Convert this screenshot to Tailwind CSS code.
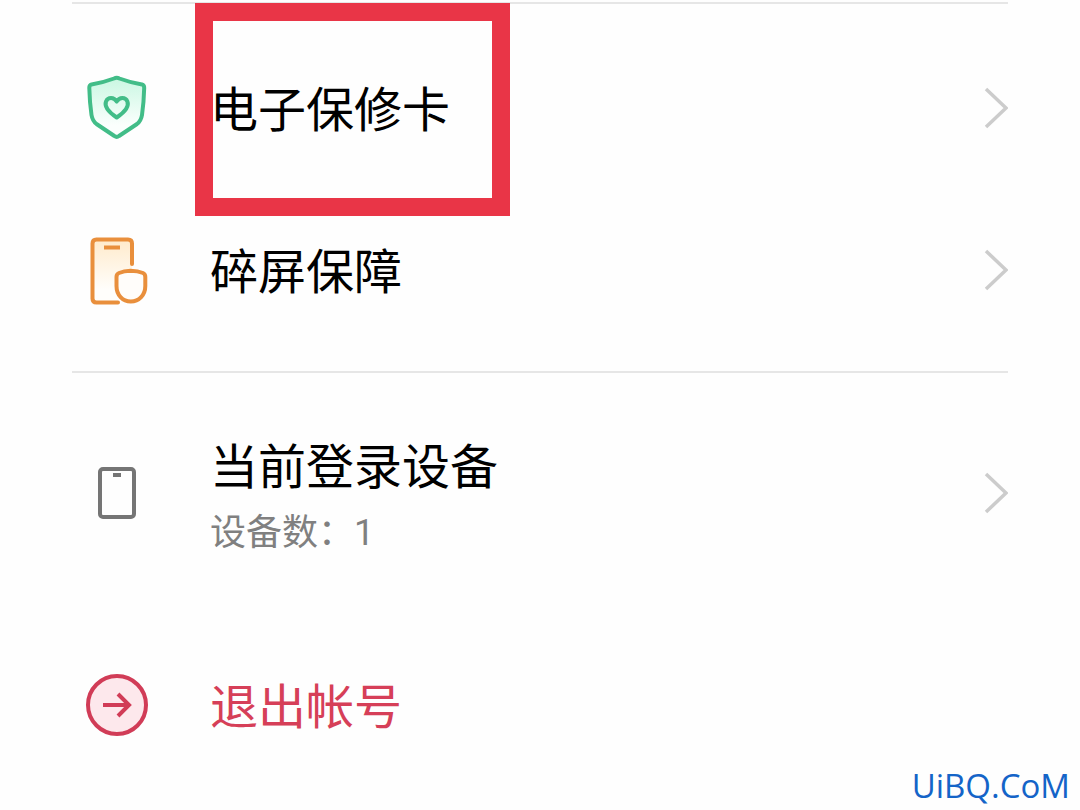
<!DOCTYPE html>
<html lang="zh-CN">
<head>
    <meta charset="UTF-8">
    <meta name="viewport" content="width=device-width, initial-scale=1.0">
    <title>帐号</title>
    <script src="https://cdn.jsdelivr.net/npm/@tailwindcss/browser@4"></script>
</head>
<body class="relative min-h-screen bg-[#fefefe] font-['Noto_Sans_CJK_SC',sans-serif] text-black">
    <main class="px-[72px] pt-[2px]">
        <section class="border-t-2 border-[#e6e6e6] pt-[23px] pb-5">
            <a href="#warranty" class="relative flex h-[162px] items-center gap-12">
                <span class="flex w-[90px] shrink-0 justify-center">
                    <svg class="size-[72px]" viewBox="0 0 72 72" fill="none" stroke="#42bd88" stroke-width="4" stroke-linejoin="round" stroke-linecap="round" aria-hidden="true">
                        <defs>
                            <linearGradient id="shield" x1="0" y1="0" x2="0" y2="1">
                                <stop offset="0" stop-color="#c9f7e2"/>
                                <stop offset="0.8" stop-color="#fbfffd"/>
                            </linearGradient>
                        </defs>
                        <path fill="url(#shield)" d="M33 6.500Q35.700 5.200 38.400 6.500Q49 10.500 61 12.400Q63.300 13 63.200 16Q62.800 31 61 43Q60 49 56 52L38 64Q35.700 65.700 33.400 64L15.500 52Q11.500 49 10.500 43Q8.700 31 8.300 16Q8.200 13 10.500 12.400Q22.500 10.500 33 6.500Z"/>
                        <path d="M35.700 29.600C33 25 27 24.800 25 29.500C22.700 35.500 29 41 35.700 45.500C42.400 41 48.700 35.500 46.400 29.500C44.400 24.800 38.400 25 35.700 29.600Z"/>
                    </svg>
                </span>
                <span class="flex-1 pb-1 text-5xl">电子保修卡</span>
                <svg class="h-[44px] w-[28px]" viewBox="0 0 28 44" fill="none" stroke="#cccccc" stroke-width="3.500" aria-hidden="true">
                    <path d="M6 3L26 22L6 41"/>
                </svg>
                <span class="pointer-events-none absolute -top-6 left-[123px] h-[213px] w-[315px] border-[18px] border-[#e93547]"></span>
            </a>
            <a href="#screen" class="flex h-[162px] items-center gap-12">
                <span class="flex w-[90px] shrink-0 justify-center">
                    <svg class="size-[72px]" viewBox="0 0 72 72" fill="none" stroke="#e98f3c" stroke-width="4" stroke-linecap="round" aria-hidden="true">
                        <defs>
                            <linearGradient id="phone" x1="0" y1="0" x2="0" y2="1">
                                <stop offset="0" stop-color="#ffeacb"/>
                                <stop offset="0.8" stop-color="#fffefb"/>
                            </linearGradient>
                        </defs>
                        <path fill="url(#phone)" stroke="none" d="M11 5H51V36L37 39V68H11Z"/>
                        <path d="M51 30V9.500Q51 5.500 47 5.500H15.500Q11.500 5.500 11.500 9.500V64.500Q11.500 68.500 15.500 68.500H37"/>
                        <path stroke-linecap="butt" d="M23 13.500H39"/>
                        <path fill="#fffdfa" stroke-linejoin="round" d="M49.500 36.800Q57 37 62 39Q64.300 40 64.300 43V52C64.300 61 58 67.500 49.800 67.500S35.500 61 35.500 52V43Q35.500 40 38 39Q43 37 49.500 36.800Z"/>
                    </svg>
                </span>
                <span class="flex-1 pb-1 text-5xl">碎屏保障</span>
                <svg class="h-[44px] w-[28px]" viewBox="0 0 28 44" fill="none" stroke="#cccccc" stroke-width="3.500" aria-hidden="true">
                    <path d="M6 3L26 22L6 41"/>
                </svg>
            </a>
        </section>

        <section class="border-t-2 border-[#e6e6e6]">
            <a href="#devices" class="flex h-[240px] items-center gap-12">
                <span class="flex w-[90px] shrink-0 justify-center">
                    <svg class="size-[72px]" viewBox="0 0 72 72" fill="none" stroke="#757575" stroke-width="4" aria-hidden="true">
                        <rect x="19" y="12" width="34" height="48" rx="3"/>
                        <path d="M32 18H40"/>
                    </svg>
                </span>
                <span class="flex flex-1 flex-col gap-3 pt-1">
                    <span class="text-5xl leading-[60px]">当前登录设备</span>
                    <span class="text-4xl leading-[48px] text-[#808080]">设备数：<span class="font-[Roboto,sans-serif]">1</span></span>
                </span>
                <svg class="h-[44px] w-[28px]" viewBox="0 0 28 44" fill="none" stroke="#cccccc" stroke-width="3.500" aria-hidden="true">
                    <path d="M6 3L26 22L6 41"/>
                </svg>
            </a>
            <button type="button" class="flex h-[184px] w-full items-center gap-12 text-left text-[#d63f58]">
                <span class="flex w-[90px] shrink-0 justify-center">
                    <svg class="size-[72px]" viewBox="0 0 72 72" fill="none" stroke="#d13c57" stroke-width="4" aria-hidden="true">
                        <circle cx="36" cy="36" r="29" fill="#fde8ec"/>
                        <path d="M22 36H48M37 25L48 36L37 47"/>
                    </svg>
                </span>
                <span class="flex-1 pb-1 text-5xl">退出帐号</span>
            </button>
        </section>
    </main>

    <footer class="absolute right-[10px] bottom-1 font-['Open_Sans',sans-serif] text-[33px] leading-[40px] font-medium text-[#1464c8]">UiBQ.CoM</footer>
</body>
</html>
